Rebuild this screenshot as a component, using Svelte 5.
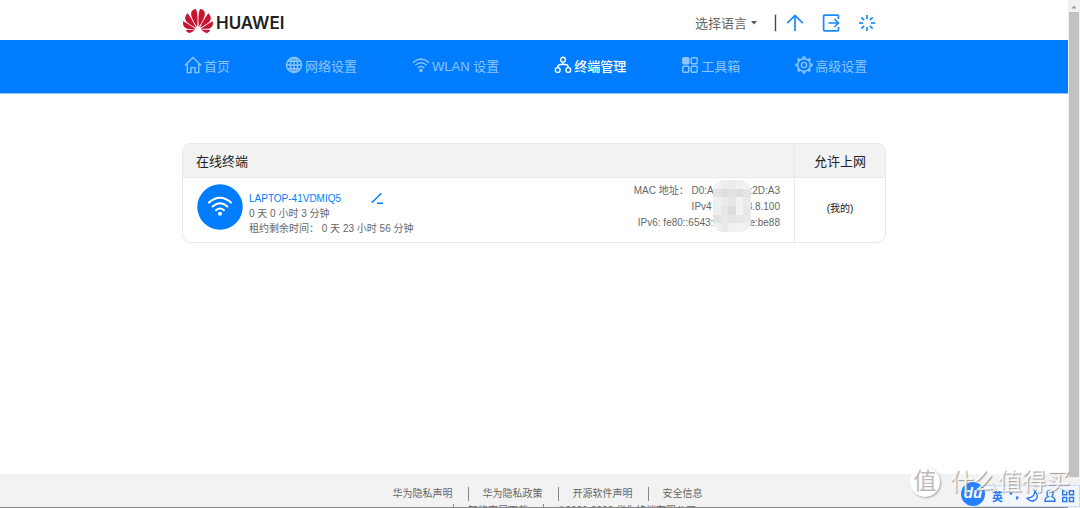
<script lang="ts">
	const navItems = [
		{ id: "home", label: "首页" },
		{ id: "network", label: "网络设置" },
		{ id: "wlan", label: "WLAN 设置" },
		{ id: "devices", label: "终端管理" },
		{ id: "tools", label: "工具箱" },
		{ id: "advanced", label: "高级设置" },
	];
	let current = $state("devices");

	const addresses = [
		{ start: "MAC 地址： D0:AE", hidden: 29, end: ":2D:A3" },
		{ start: "IPv4", hidden: 35, end: "3.8.100" },
		{ start: "IPv6: fe80::6543:", hidden: 36, end: "e:be88" },
	];

	const footerLinks = ["华为隐私声明", "华为隐私政策", "开源软件声明", "安全信息"];

	// grey levels of the privacy mosaic, row by row
	const mosaic = [
		[242, 238, 236, 240, 242],
		[228, 222, 226, 222, 228],
		[240, 236, 230, 242, 234],
		[238, 230, 220, 244, 232],
		[226, 232, 228, 230, 234],
		[238, 234, 240, 242, 240],
	];

	const spokes = [0, 45, 90, 135, 180, 225, 270, 315];
</script>

<div class="window">
	<div class="page">
		<header class="container top">
			<a class="logo" href="#home">
				<svg viewBox="0 2.9 24 18.2" width="30" height="24" preserveAspectRatio="none" aria-hidden="true">
					<path
						fill="#c7152f"
						d="M3.67 6.14S1.82 7.91 1.72 9.78v.35c.08 1.51 1.22 2.4 1.22 2.4 1.83 1.79 6.26 4.04 7.3 4.55 0 0 .06.03.1-.01l.02-.04v-.04C7.52 10.8 3.67 6.14 3.67 6.14zM9.65 18.6c-.02-.08-.1-.08-.1-.08l-7.38.26c.8 1.43 2.15 2.53 3.56 2.2.96-.25 3.16-1.78 3.88-2.3.06-.05.04-.09.04-.09zm.08-.78C6.49 15.63.21 12.28.21 12.28c-.15.46-.2.9-.21 1.3v.07c0 1.07.4 1.82.4 1.82.8 1.69 2.34 2.2 2.34 2.2.7.3 1.4.31 1.4.31.12.02 4.4 0 5.54 0 .05 0 .08-.05.08-.05v-.06c0-.03-.03-.05-.03-.05zM9.06 3.19a3.42 3.42 0 00-2.57 3.15v.41c.03.6.16 1.05.16 1.05.66 2.9 3.86 7.65 4.55 8.65.05.05.1.03.1.03a.1.1 0 00.06-.1c1.06-10.6-1.11-13.42-1.11-13.42-.32.02-1.19.23-1.19.23zm8.299 2.27s-.49-1.8-2.44-2.28c0 0-.57-.14-1.17-.22 0 0-2.18 2.81-1.12 13.43.01.07.06.08.06.08.07.03.1-.03.1-.03.72-1.03 3.9-5.76 4.55-8.64 0 0 .36-1.4.02-2.34zm-2.92 13.07s-.07 0-.09.05c0 0-.01.07.03.1.7.51 2.85 2 3.88 2.3 0 0 .16.05.43.06h.14c.69-.02 1.9-.37 3-2.26l-7.4-.25zm7.83-8.41c.14-2.06-1.94-3.97-1.94-3.98 0 0-3.85 4.66-6.67 10.8 0 0-.03.08.02.13l.04.01h.06c1.06-.53 5.46-2.77 7.28-4.54 0 0 1.15-.93 1.21-2.42zm1.52 2.14s-6.28 3.37-9.52 5.55c0 0-.05.04-.03.11 0 0 .03.06.07.06 1.16 0 5.56 0 5.67-.02 0 0 .57-.02 1.27-.29 0 0 1.56-.5 2.37-2.27 0 0 .73-1.45.17-3.14z"
					/>
				</svg>
				<span>HUAWEI</span>
			</a>

			<div class="actions">
				<label class="language">
					<select aria-label="选择语言">
						<option>选择语言</option>
					</select>
					<svg viewBox="0 0 6 4" width="6" height="4" aria-hidden="true"><path d="M0 0h6L3 3.5z" fill="#555" /></svg>
				</label>
				<span class="divider"></span>
				<button aria-label="升级">
					<svg viewBox="0 0 18 18" width="18" height="18"><path d="M9 17V1.5M1.2 9.2 9 1.5l7.8 7.7" /></svg>
				</button>
				<button aria-label="退出">
					<svg viewBox="0 0 18 18" width="18" height="18">
						<path d="M16.5 5V2.2q0-1-1-1H2.6q-1 0-1 1v13.6q0 1 1 1h12.9q1 0 1-1V13M6.5 9H16.5M12.3 5 16.5 9l-4.2 4" />
					</svg>
				</button>
				<button aria-label="重启">
					<svg viewBox="0 0 18 18" width="18" height="18">
						{#each spokes as angle}
							<path d="M9 1v4" transform="rotate({angle} 9 9)" />
						{/each}
					</svg>
				</button>
			</div>
		</header>

		<nav>
			<div class="container menu">
				{#each navItems as item}
					<a href="#{item.id}" class:active={current === item.id} onclick={() => (current = item.id)}>
						<svg viewBox="0 0 18 18" width="18" height="18" aria-hidden="true">
							{#if item.id === "home"}
								<path d="M.8 9.6 9 1.6l8.2 8M3.3 8v8.6h3.6v-5h4.2v5h3.6V8" />
							{:else if item.id === "network"}
								<circle cx="9" cy="9" r="7.5" />
								<ellipse cx="9" cy="9" rx="3.6" ry="7.5" />
								<path d="M9 1.5v15M1.5 9h15M2.6 5.2h12.8M2.6 12.8h12.8" />
							{:else if item.id === "wlan"}
								<path d="M1 6.6Q9-.4 17 6.6M3.4 9.3q5.6-5 11.2 0M5.8 11.9q3.2-2.8 6.4 0" />
								<circle class="solid" cx="9" cy="14.5" r="1.1" />
							{:else if item.id === "devices"}
								<circle cx="9" cy="3.7" r="2.4" />
								<circle cx="3.7" cy="14" r="2.4" />
								<circle cx="14.3" cy="14" r="2.4" />
								<path d="M9 6.1v2.4M3.7 11.6q0-3.1 3-3.1h4.6q3 0 3 3.1" />
							{:else if item.id === "tools"}
								<rect class="solid" x="1.8" y="1.8" width="6" height="6" rx="1" />
								<rect x="10.2" y="1.8" width="6" height="6" rx="1" />
								<rect x="1.8" y="10.2" width="6" height="6" rx="1" />
								<rect x="10.2" y="10.2" width="6" height="6" rx="1" />
							{:else}
								<circle cx="9" cy="9" r="6.3" />
								<circle cx="9" cy="9" r="2.6" />
								{#each spokes as angle}
									<path d="M7.9 2.6 8.3.9h1.4l.4 1.7" transform="rotate({angle} 9 9)" />
								{/each}
							{/if}
						</svg>
						<span>{item.label}</span>
					</a>
				{/each}
			</div>
		</nav>

		<main class="container">
			<table>
				<thead>
					<tr>
						<th>在线终端</th>
						<th class="access">允许上网</th>
					</tr>
				</thead>
				<tbody>
					<tr>
						<td class="device-cell">
							<div class="device">
								<svg class="avatar" viewBox="0 0 46 46" width="46" height="46" aria-hidden="true">
									<circle cx="23" cy="23" r="22.7" fill="#007dff" />
									<path d="M12 18.6q11-9.6 22 0M15.6 22.5q7.4-6.4 14.8 0M19 26.2q4-3.4 8 0" />
									<circle cx="23" cy="29.8" r="2" fill="#fff" />
								</svg>
								<div class="info">
									<div class="name">
										<a href="#device">LAPTOP-41VDMIQ5</a>
										<button aria-label="编辑名称">
											<svg viewBox="0 0 12 12" width="12" height="12"><path d="M.8 10.8 10.4 1.2M6 11.2h6" /></svg>
										</button>
									</div>
									<div>0 天 0 小时 3 分钟</div>
									<div>租约剩余时间： 0 天 23 小时 56 分钟</div>
								</div>
								<div class="addresses">
									{#each addresses as address}
										<div>
											<span>{address.start}</span><span class="hidden" style="width: {address.hidden}px"></span><span
												>{address.end}</span
											>
										</div>
									{/each}
								</div>
							</div>
							<div class="mosaic">
								{#each mosaic as row}
									{#each row as level}
										<i style="background: rgb({level}, {level}, {level})"></i>
									{/each}
								{/each}
							</div>
						</td>
						<td class="access">(我的)</td>
					</tr>
				</tbody>
			</table>
		</main>

		<footer>
			<div class="links">
				{#each footerLinks as link}
					<a href="#about">{link}</a>
				{/each}
			</div>
			<div class="links legal">
				<a href="#app">智能家居下载</a>
				<span>©2006-2020 华为终端有限公司</span>
			</div>
		</footer>
	</div>

	<div class="scrollbar">
		<svg viewBox="0 0 12 12" width="12" height="12" aria-hidden="true"><path d="M3.5 8.5 6 5.5l2.5 3z" fill="#999" /></svg>
		<div class="thumb"></div>
	</div>

	<div class="ime">
		<span class="du">du</span>
		<b>英</b>
		<svg viewBox="0 0 14 14" width="14" height="14"><circle cx="4" cy="4.5" r="1.3" /><path d="M8.6 7.5h3q.2 2.8-2.6 4 .8-1.3.4-1.8z" /></svg>
		<svg viewBox="0 0 14 14" width="14" height="14"><path class="line" d="M9.5 1.8q1.2 6-7.4 7.4 3.2 4 7.5 2.3 5.6-3.7-.1-9.7z" /></svg>
		<svg viewBox="0 0 14 14" width="14" height="14"><path class="line" d="M7 1.4c-4 0-3.6 4.6-1.8 6.2Q2 8.5 2 12.2h10Q12 8.5 8.8 7.6C10.6 6 11 1.4 7 1.4z" /></svg>
		<svg viewBox="0 0 14 14" width="14" height="14"><path class="line" d="M1.7 1.7h4v4h-4zM8.5 1.7h4v4h-4zM1.7 8.5h4v4h-4zM8.5 8.5h4v4h-4z" /></svg>
	</div>

	<div class="watermark">
		<span class="badge">值</span>
		<span>什么值得买</span>
	</div>
</div>

<style>
	:global(body) {
		margin: 0;
		background: #fff;
	}

	.window {
		position: relative;
		display: flex;
		height: 100vh;
		overflow: hidden;
		font-family: "Liberation Sans", "Noto Sans CJK SC", sans-serif;
		font-size: 10px;
		color: #666;
	}

	.page {
		flex: 1;
		display: flex;
		flex-direction: column;
		min-width: 0;
	}

	a {
		color: inherit;
		text-decoration: none;
	}

	button {
		display: flex;
		padding: 0;
		border: 0;
		background: none;
		cursor: pointer;
	}

	svg {
		flex: none;
		display: block;
	}

	.container {
		box-sizing: border-box;
		width: 100%;
		max-width: 704px;
		margin: 0 auto;
	}

	.top {
		display: flex;
		justify-content: space-between;
		height: 40px;
		padding: 0 10px 0 1px;
	}

	.logo {
		display: flex;
		align-items: center;
		gap: 3px;
		padding-top: 2px;
		font: 600 17px/20px Inter, sans-serif;
		color: #231f20;
	}

	.logo span {
		padding-top: 3px;
	}

	.actions {
		display: flex;
		align-items: center;
		gap: 18px;
		padding-top: 6px;
	}

	.language {
		display: flex;
		align-items: center;
		gap: 3px;
	}

	select {
		appearance: none;
		padding: 0;
		border: 0;
		background: none;
		font: inherit;
		font-size: 13px;
		color: #666;
	}

	.divider {
		width: 1px;
		height: 16px;
		margin-right: -8px;
		background: #444;
		outline: 1px solid #ddd;
	}

	.actions button path {
		fill: none;
		stroke: #1a8aff;
		stroke-width: 1.7;
	}

	nav {
		background: #007dff;
		border-bottom: 1px solid #8cc5ff;
	}

	.menu {
		display: flex;
		gap: 55px;
		height: 53px;
		padding: 0 0 3px 2px;
		font-size: 13px;
	}

	.menu a {
		display: flex;
		align-items: center;
		gap: 2px;
		white-space: nowrap;
		color: #8cc5ff;
	}

	.menu a.active {
		font-weight: 500;
		color: #fff;
	}

	.menu svg {
		fill: none;
		stroke: currentColor;
		stroke-width: 1.4;
	}

	.menu .solid {
		fill: currentColor;
	}

	main {
		flex: 1;
		padding-top: 49px;
	}

	table {
		width: 100%;
		border: 1px solid #e8e8e8;
		border-radius: 9px;
		border-spacing: 0;
		overflow: hidden;
	}

	th {
		height: 34px;
		padding: 0 13px;
		background: #f2f2f2;
		border-bottom: 1px solid #e8e8e8;
		box-sizing: border-box;
		text-align: left;
		font-size: 13px;
		font-weight: 400;
		color: #222;
	}

	td {
		height: 64px;
		padding: 0;
	}

	.access {
		width: 90px;
		padding: 0;
		border-left: 1px solid #e8e8e8;
		text-align: center;
		color: #222;
	}

	td.access {
		padding-bottom: 6px;
		height: 58px;
	}

	.device-cell {
		position: relative;
	}

	.device {
		display: flex;
		align-items: center;
		padding: 0 14px 6px;
	}

	.avatar path {
		fill: none;
		stroke: #fff;
		stroke-width: 2;
		stroke-linecap: round;
	}

	.info {
		flex: 1;
		padding: 12px 0 0 6px;
		line-height: 15px;
	}

	.name {
		display: flex;
		align-items: center;
		gap: 30px;
		color: #007dff;
	}

	.name path {
		stroke: #007dff;
		stroke-width: 1.5;
	}

	.addresses {
		line-height: 16px;
		text-align: right;
	}

	.hidden {
		display: inline-block;
	}

	.mosaic {
		position: absolute;
		top: 2px;
		right: 43px;
		display: grid;
		grid-template: repeat(6, 1fr) / repeat(5, 1fr);
		width: 38px;
		height: 52px;
		border-radius: 10px;
		overflow: hidden;
	}

	footer {
		height: 33px;
		overflow: hidden;
		background: #f2f2f2;
		border-bottom: 1px solid #888;
	}

	.links {
		display: flex;
		justify-content: center;
		padding: 13px 0 0 28px;
		line-height: 14px;
	}

	.links > * {
		padding: 0 15px 0 14px;
	}

	.links > * + *,
	.legal > :first-child {
		border-left: 1px solid #888;
	}

	.legal {
		padding: 3px 0 0 96px;
	}

	.scrollbar {
		display: flex;
		flex-direction: column;
		width: 12px;
		background: #f1f1f1;
	}

	.thumb {
		flex: none;
		height: calc(100% - 43px);
		margin: 0 1px;
		background: #c1c1c1;
	}

	.ime {
		position: absolute;
		right: 0;
		bottom: 1px;
		display: flex;
		align-items: center;
		gap: 4px;
		box-sizing: border-box;
		height: 22px;
		padding-right: 4px;
		border: 1px solid #c5dcfa;
		border-left: 0;
		background: #f3f7fd;
		color: #2878f0;
	}

	.ime b {
		font-size: 11px;
	}

	.ime svg {
		fill: #2878f0;
	}

	.ime .line {
		fill: none;
		stroke: #2878f0;
		stroke-width: 1.4;
	}

	.du {
		width: 24px;
		height: 24px;
		margin: 0 3px 4px -12px;
		border-radius: 50%;
		background: #2980ff;
		font: italic bold 15px/22px "Liberation Sans", sans-serif;
		text-align: center;
		color: #fff;
	}

	.watermark {
		position: absolute;
		right: 10px;
		bottom: 9px;
		display: flex;
		align-items: center;
		gap: 10px;
		font-size: 24px;
		line-height: 34px;
		color: rgba(255, 255, 255, 0.85);
		text-shadow: 1px 1px 1px rgba(120, 120, 120, 0.7);
		pointer-events: none;
	}

	.badge {
		width: 30px;
		height: 30px;
		border-radius: 50%;
		background: #fff;
		box-shadow: 1px 1px 2px #aaa;
		font-size: 23px;
		line-height: 29px;
		text-align: center;
		color: #bbb;
		text-shadow: none;
	}
</style>
